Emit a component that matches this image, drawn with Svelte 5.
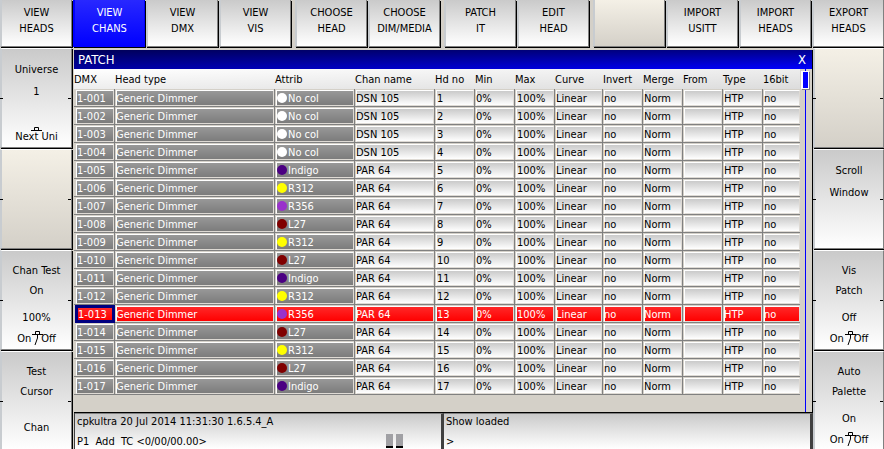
<script>
  const topKeys = [
    { lines: ['VIEW', 'HEADS'] },
    { lines: ['VIEW', 'CHANS'], active: true },
    { lines: ['VIEW', 'DMX'] },
    { lines: ['VIEW', 'VIS'] },
    { lines: ['CHOOSE', 'HEAD'], gap: true },
    { lines: ['CHOOSE', 'DIM/MEDIA'] },
    { lines: ['PATCH', 'IT'], gap: true },
    { lines: ['EDIT', 'HEAD'] },
    { lines: [], gap: true },
    { lines: ['IMPORT', 'USITT'] },
    { lines: ['IMPORT', 'HEADS'] },
    { lines: ['EXPORT', 'HEADS'] }
  ];

  const leftKeys = [
    { upper: ['Universe', '1'], spaced: true, lower: [], push: 'Next Uni' },
    { upper: [], lower: [], blank: true },
    { upper: ['Chan Test', 'On'], lower: ['100%'], toggle: true },
    { upper: ['Test', 'Cursor'], lower: ['Chan'], raised: true }
  ];

  const rightKeys = [
    { upper: [], lower: [], blank: true },
    { upper: ['Scroll', 'Window'], spaced: true, lower: [] },
    { upper: ['Vis', 'Patch'], lower: ['Off'], toggle: true },
    { upper: ['Auto', 'Palette'], lower: ['On'], toggle: true }
  ];

  const columns = [
    ['DMX', 41], ['Head type', 160], ['Attrib', 80], ['Chan name', 80], ['Hd no', 40],
    ['Min', 40], ['Max', 40], ['Curve', 48], ['Invert', 40], ['Merge', 40],
    ['From', 40], ['Type', 40], ['16bit', 37]
  ];

  const colours = {
    'No col': '#ffffff',
    Indigo: '#4b0082',
    R312: '#ffff00',
    R356: '#9932cc',
    L27: '#800000'
  };

  const attribs = [
    'No col', 'No col', 'No col', 'No col', 'Indigo', 'R312', 'R356', 'L27', 'R312',
    'L27', 'Indigo', 'R312', 'R356', 'L27', 'R312', 'L27', 'Indigo'
  ];

  let selected = $state(13);

  const rows = attribs.map((attrib, i) => ({
    no: i + 1,
    dmx: '1-' + String(i + 1).padStart(3, '0'),
    attrib,
    chan: i < 4 ? 'DSN 105' : 'PAR 64'
  }));
</script>

{#snippet sideKey(key)}
  <button class="key side" class:blank={key.blank} class:spaced={key.spaced} class:raised={key.raised} aria-label={key.blank ? 'Unused key' : undefined}>
    {#each key.upper as line}<span class="line">{line}</span>{/each}
    <span class="lower">
      {#each key.lower as line}<span class="line">{line}</span>{/each}
      {#if key.toggle}
        <span class="line toggle">
          <span>On</span>
          <svg width="11" height="16" viewBox="0 0 11 16" aria-hidden="true">
            <path d="M0 3.5H11M3.5 3.5V0.5H7.5V3.5M5.5 4V7L3 14" fill="none" stroke="#000" />
          </svg>
          <span>Off</span>
        </span>
      {/if}
      {#if key.push}
        <span class="line push">
          {key.push}
          <svg width="11" height="5" viewBox="0 0 11 5" aria-hidden="true">
            <path d="M0 4.5H11M3.5 4.5V1.5H7.5V4.5" fill="none" stroke="#000" />
          </svg>
        </span>
      {/if}
    </span>
  </button>
{/snippet}

<div class="console">
  <nav class="top">
    {#each topKeys as key}
      <button class="key" class:active={key.active} class:gap={key.gap} class:blank={!key.lines.length} aria-label={key.lines.length ? undefined : 'Unused key'}>
        {#each key.lines as line}<span>{line}</span>{/each}
      </button>
    {/each}
  </nav>

  <div class="body">
    <div class="rail">
      {#each leftKeys as key}{@render sideKey(key)}{/each}
    </div>

    <main>
      <section class="window">
        <header>
          <h1>PATCH</h1>
          <button class="close" aria-label="Close">X</button>
        </header>
        <div class="content">
          <table>
            <colgroup>
              {#each columns as [, width]}<col style="width: {width}px" />{/each}
            </colgroup>
            <thead>
              <tr>{#each columns as [name]}<th>{name}</th>{/each}</tr>
            </thead>
            <tbody>
              {#each rows as row}
                <tr class:selected={row.no === selected} onclick={() => (selected = row.no)}>
                  <td class="dark cursor"><div>{row.dmx}</div></td>
                  <td class="dark"><div>Generic Dimmer</div></td>
                  <td class="dark attrib">
                    <div><i style="background: {colours[row.attrib]}"></i>{row.attrib}</div>
                  </td>
                  <td><div>{row.chan}</div></td>
                  <td class="num"><div>{row.no}</div></td>
                  <td><div>0%</div></td>
                  <td class="num"><div>100%</div></td>
                  <td><div>Linear</div></td>
                  <td><div>no</div></td>
                  <td><div>Norm</div></td>
                  <td><div></div></td>
                  <td><div>HTP</div></td>
                  <td><div>no</div></td>
                </tr>
              {/each}
            </tbody>
          </table>
          <div class="scroll"><div class="thumb"></div></div>
        </div>
      </section>

      <footer>
        <div class="status">
          <p>cpkultra 20 Jul 2014 11:31:30 1.6.5.4_A</p>
          <p class="prompt">
            <span>P1&nbsp; Add&nbsp; TC &lt;0/00/00.00&gt;</span>
            <span class="meters"><b></b><b></b></span>
          </p>
        </div>
        <div class="status">
          <p>Show loaded</p>
          <p>&gt;</p>
        </div>
      </footer>
    </main>

    <div class="rail right">
      {#each rightKeys as key}{@render sideKey(key)}{/each}
    </div>
  </div>
</div>

<style>
  .console {
    display: flex;
    flex-direction: column;
    height: 100vh;
    overflow: hidden;
    background: #d4d0c8;
    color: #000;
    font: 11px/16px 'DejaVu Sans Condensed', Tahoma, 'DejaVu Sans', sans-serif;
  }
  button {
    font: inherit;
    color: inherit;
    margin: 0;
    border-radius: 0;
  }
  .key {
    display: flex;
    flex-direction: column;
    align-items: center;
    min-width: 0;
    padding: 0;
    border: solid;
    border-width: 0 1px 1px 2px;
    border-color: #c8ccd0 #808080 #808080 #c8ccd0;
    background: linear-gradient(#cacaca, #fff);
    box-shadow: 1px 1px 0 #000;
  }
  .key.blank {
    background: linear-gradient(#f4f0e6, #d4d0c8);
  }
  .top {
    display: flex;
    flex: none;
    height: 47px;
    gap: 1px;
  }
  .top .key {
    flex: 1 1 0;
    padding-top: 5px;
  }
  .top .gap {
    margin-left: 3px;
  }
  .top .active {
    color: #fff;
    background: linear-gradient(#2828ff, #00f);
    border-color: #00f;
  }
  .body {
    display: flex;
    flex: 1;
    min-height: 0;
    padding-top: 1px;
  }
  .rail {
    flex: none;
    width: 72px;
    margin-right: 2px;
  }
  .rail.right {
    width: 71px;
    margin: 0;
  }
  .side {
    position: relative;
    width: 100%;
    height: 100px;
    margin-bottom: 1px;
    padding-top: 10px;
    border-top: 1px solid #fff;
  }
  .side::before,
  .side::after {
    content: '';
    position: absolute;
    top: 49px;
    width: 3px;
    height: 1px;
    background: #000;
  }
  .side::before {
    left: -2px;
  }
  .side::after {
    right: 0;
  }
  .line {
    display: block;
    line-height: 20px;
  }
  .spaced > .line {
    line-height: 22px;
  }
  .lower {
    margin-top: auto;
  }
  .lower .line {
    line-height: 21px;
  }
  .raised .lower {
    padding-bottom: 12px;
  }
  .toggle {
    display: flex;
    align-items: center;
  }
  .toggle svg {
    margin: 0 -2px 0 1px;
  }
  .push {
    position: relative;
  }
  .push svg {
    position: absolute;
    left: 16px;
    top: 0;
  }
  main {
    display: flex;
    flex: 1;
    flex-direction: column;
    min-width: 0;
    padding-top: 2px;
  }
  .window {
    display: flex;
    flex: 1;
    flex-direction: column;
    min-height: 0;
    border-right: 1px solid #000;
    border-bottom: 1px solid #000;
  }
  header {
    display: flex;
    flex: none;
    align-items: center;
    justify-content: space-between;
    height: 19px;
    padding: 0 6px 0 4px;
    color: #fff;
    background: linear-gradient(rgba(0, 0, 0, 0.45), transparent), linear-gradient(to right, #0000a0, #00f);
  }
  h1 {
    margin: 0;
    font-size: 13px;
    font-weight: normal;
  }
  .close {
    padding: 0;
    border: 0;
    background: none;
    font-size: 13px;
  }
  .content {
    display: flex;
    flex: 1;
    min-height: 0;
  }
  table {
    flex: 1;
    width: 100%;
    align-self: flex-start;
    table-layout: fixed;
    border-spacing: 0;
  }
  thead {
    background: linear-gradient(to right bottom, #fff, #dcdcdc);
  }
  th {
    height: 18px;
    padding: 2px 0 0;
    text-align: left;
    font-weight: normal;
    white-space: nowrap;
  }
  td {
    height: 16px;
    padding: 1px 0 0 1px;
    border: solid #808080;
    border-width: 0 1px 1px 0;
    white-space: nowrap;
  }
  td:last-child {
    border-right: 0;
  }
  td div {
    display: flex;
    align-items: center;
    height: 12px;
    padding-top: 2px;
    border: 1px solid;
    border-color: #fff #dedad4 #dedad4 #fff;
    text-indent: -1px;
    background: linear-gradient(#cacaca, #fff);
  }
  td.num div {
    padding-left: 1px;
  }
  .dark div {
    color: #fff;
    background: linear-gradient(#989898, #7c7c7c);
  }
  .cursor {
    padding-left: 2px;
  }
  .cursor div {
    text-indent: 0;
  }
  .selected div {
    color: #fff;
    background: linear-gradient(#ff2828, #f00);
  }
  .selected .cursor {
    padding: 0 0 0 1px;
    border: 0;
  }
  .selected .cursor div {
    height: 11px;
    padding-top: 1px;
    border: 3px solid #000080;
  }
  i {
    flex: none;
    width: 10px;
    height: 10px;
    margin: 0 2px 2px 0;
    border-radius: 5px;
  }
  .scroll {
    flex: none;
    width: 12px;
    padding-top: 2px;
    background: linear-gradient(#00f, #00f) 5px 0 / 1px 100% no-repeat;
  }
  .thumb {
    width: 5px;
    height: 16px;
    margin-left: 1px;
    border: 1px solid #fff;
    border-width: 1px 1px 1px 2px;
    background: #00f;
    box-shadow: 1px 1px 0 #808080;
  }
  footer {
    display: flex;
    flex: none;
    height: 36px;
    border-left: 1px solid #404040;
  }
  .status {
    flex: 1;
    padding-left: 2px;
    border-top: 1px solid #808080;
    border-right: 3px solid #404040;
    background: linear-gradient(#cacaca, #fff);
  }
  .status p {
    margin: 0;
    line-height: 16px;
  }
  .status p + p {
    line-height: 20px;
    margin-top: 2px;
  }
  .prompt {
    display: flex;
    justify-content: space-between;
  }
  .meters {
    display: flex;
    gap: 3px;
    padding: 2px 38px 0 0;
  }
  b {
    width: 7px;
    height: 12px;
    background: #a0a0a4;
    border-bottom: 2px solid #000;
  }
</style>
